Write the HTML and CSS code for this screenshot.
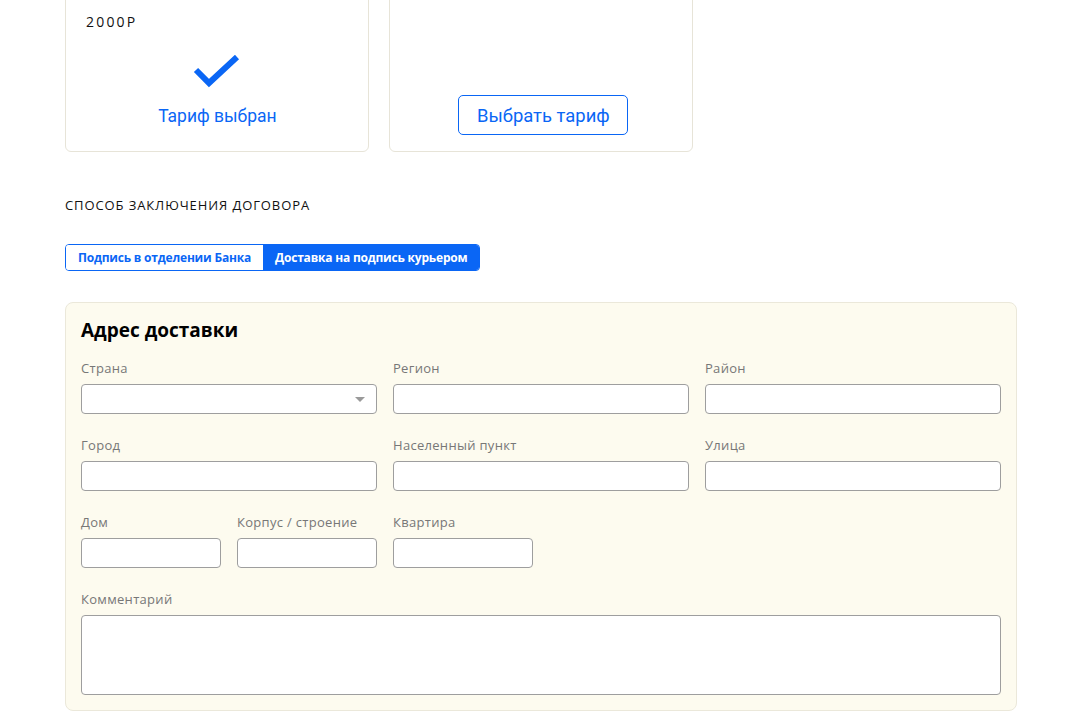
FILE: index.html
```html
<!DOCTYPE html>
<html lang="ru">
<head>
<meta charset="utf-8">
<title>Тарифы и доставка</title>
<link rel="stylesheet" href="styles.css">
</head>
<body>
<div class="page">
  <div class="tariffs">
    <div class="card card-selected">
      <div class="price">2000Р</div>
      <svg class="check" width="48" height="36" viewBox="0 0 48 36" aria-hidden="true">
        <path d="M3 15 L16 28 L44 2" fill="none" stroke="#0a66f5" stroke-width="6"/>
      </svg>
      <div class="chosen">Тариф выбран</div>
    </div>
    <div class="card card-other">
      <button class="choose-btn" type="button"><span class="btn-text">Выбрать тариф</span></button>
    </div>
  </div>

  <div class="section-title">Способ заключения договора</div>

  <div class="tabs">
    <button class="tab" type="button">Подпись в отделении Банка</button>
    <button class="tab tab-active" type="button">Доставка на подпись курьером</button>
  </div>

  <div class="address">
    <h2 class="address-title">Адрес доставки</h2>
    <div class="form-grid">
      <div class="field span2">
        <label class="label">Страна</label>
        <div class="input select"><span class="arrow"></span></div>
      </div>
      <div class="field span2">
        <label class="label">Регион</label>
        <div class="input"></div>
      </div>
      <div class="field span2">
        <label class="label">Район</label>
        <div class="input"></div>
      </div>

      <div class="field span2">
        <label class="label">Город</label>
        <div class="input"></div>
      </div>
      <div class="field span2">
        <label class="label">Населенный пункт</label>
        <div class="input"></div>
      </div>
      <div class="field span2">
        <label class="label">Улица</label>
        <div class="input"></div>
      </div>

      <div class="field">
        <label class="label">Дом</label>
        <div class="input"></div>
      </div>
      <div class="field">
        <label class="label">Корпус / строение</label>
        <div class="input"></div>
      </div>
      <div class="field">
        <label class="label">Квартира</label>
        <div class="input"></div>
      </div>
      <div class="field-break"></div>

      <div class="field span6 last">
        <label class="label">Комментарий</label>
        <div class="input textarea"></div>
      </div>
    </div>
  </div>
</div>
</body>
</html>
```

FILE: styles.css
```css
* { box-sizing: border-box; }

html, body {
  margin: 0;
  padding: 0;
  background: #ffffff;
  overflow: hidden;
}

body {
  font-family: "Open Sans", "Noto Sans", sans-serif;
  color: #111;
}

.page {
  width: 952px;
  margin: -40px 0 0 65px;
}

/* Tariff cards */
.tariffs {
  display: flex;
  gap: 20px;
}

.card {
  width: 304px;
  height: 192px;
  border: 1px solid #e7e4d8;
  border-radius: 6px;
  background: #fff;
  display: flex;
  flex-direction: column;
}

.card-selected {
  padding: 51px 20px 0 20px;
  align-items: center;
}

.price {
  align-self: flex-start;
  font-family: "Open Sans", sans-serif;
  font-size: 14px;
  letter-spacing: 2.2px;
  line-height: 20px;
  color: #111;
}

.check {
  margin-top: 23px;
  display: block;
}

.chosen {
  margin-top: 13px;
  font-family: "Roboto", sans-serif;
  font-size: 19px;
  line-height: 24px;
  color: #0a66f5;
  transform: scaleX(0.92);
}

.card-other {
  justify-content: flex-end;
  align-items: center;
  padding: 0 0 16px 4px;
}

.choose-btn {
  width: 170px;
  height: 40px;
  border: 1px solid #0a66f5;
  border-radius: 5px;
  background: #fff;
  color: #0a66f5;
  font-family: "Roboto", sans-serif;
  font-size: 19px;
  padding: 0;
  cursor: pointer;
}

.btn-text {
  display: inline-block;
  transform: scaleX(0.97);
}

/* Section title */
.section-title {
  margin-top: 44px;
  font-size: 13px;
  line-height: 18px;
  text-transform: uppercase;
  color: #111;
  letter-spacing: 0.9px;
}

/* Tabs */
.tabs {
  margin-top: 30px;
  display: inline-flex;
  border: 1px solid #0a66f5;
  border-radius: 4px;
  overflow: hidden;
}

.tab {
  height: 25px;
  padding: 0 12px;
  border: 0;
  background: #fff;
  color: #0a66f5;
  font-family: "Open Sans", sans-serif;
  font-weight: 700;
  font-size: 12px;
  letter-spacing: -0.2px;
  line-height: 25px;
  cursor: pointer;
}

.tab-active {
  background: #0a66f5;
  color: #fff;
}

/* Address */
.address {
  margin-top: 31px;
  background: #fdfbef;
  border: 1px solid #ebe8da;
  border-radius: 8px;
  padding: 15px;
}

.address-title {
  margin: 0;
  font-family: "Open Sans", sans-serif;
  font-weight: 700;
  font-size: 19px;
  line-height: 24px;
  color: #000;
}

.form-grid {
  margin-top: 18px;
  display: grid;
  grid-template-columns: repeat(6, 140px);
  column-gap: 16px;
}

.field {
  display: flex;
  flex-direction: column;
  margin-bottom: 23px;
}

.field.last { margin-bottom: 0; }

.span2 { grid-column: span 2; }
.span6 { grid-column: span 6; }

.field-break { grid-column: span 3; }

.label {
  font-size: 13px;
  line-height: 16px;
  letter-spacing: 0.3px;
  color: #777777;
  margin-bottom: 8px;
}

.input {
  height: 30px;
  background: #fff;
  border: 1px solid #9e9e9e;
  border-radius: 4px;
  position: relative;
}

.textarea {
  height: 80px;
}

.arrow {
  position: absolute;
  right: 11px;
  top: 12px;
  width: 0;
  height: 0;
  border-left: 5px solid transparent;
  border-right: 5px solid transparent;
  border-top: 5px solid #9a9a9a;
}
```
